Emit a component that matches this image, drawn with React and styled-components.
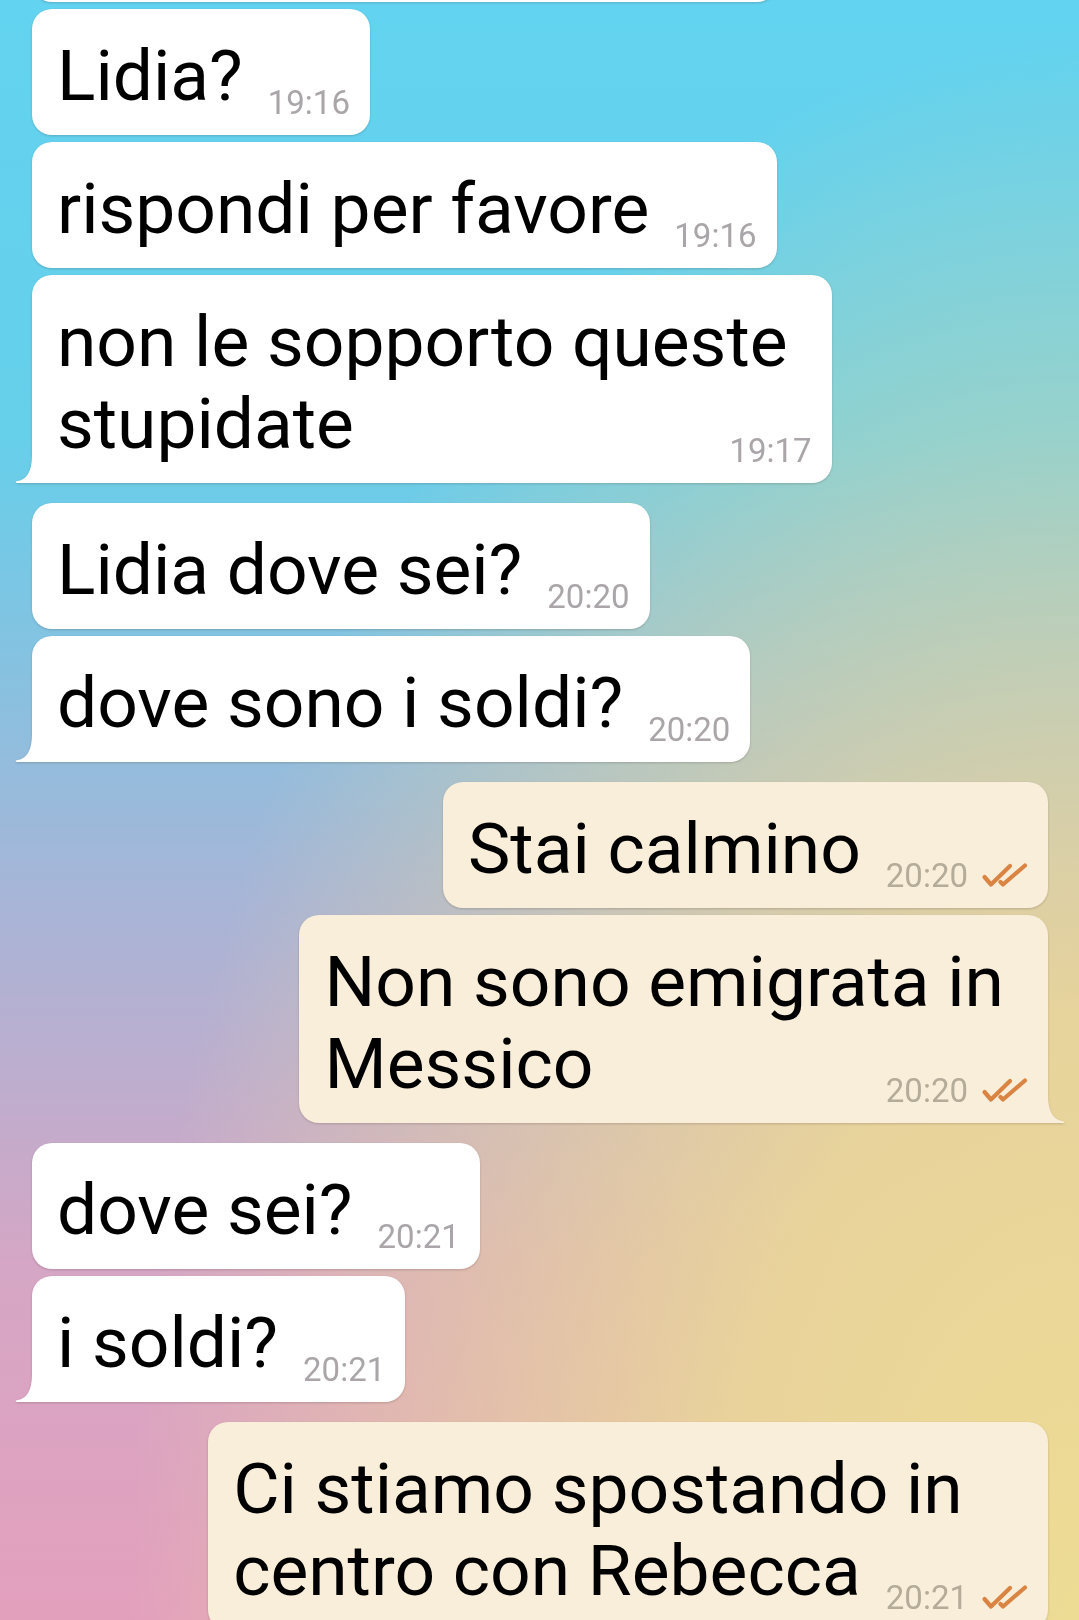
import React from "react";
import styled, { createGlobalStyle } from "styled-components";

const Global = createGlobalStyle`
  html, body {
    margin: 0;
    padding: 0;
  }
  body {
    font-family: Roboto, "Noto Sans", "Liberation Sans", sans-serif;
    -webkit-font-smoothing: antialiased;
  }
`;

const Screen = styled.div`
  width: 1079px;
  height: 1620px;
  overflow: hidden;
  background:
    radial-gradient(ellipse 88% 98% at 100% 100%, rgba(237, 220, 148, 1) 0%, rgba(234, 214, 152, 0.93) 38%, rgba(232, 210, 160, 0) 100%),
    linear-gradient(180deg, #62d3f0 0%, #66cfea 27%, #a6b5d7 55%, #d5a6c5 78%, #e3a0bd 100%);
`;

const List = styled.div`
  display: flex;
  flex-direction: column;
  padding: 0 31px 0 32px;
`;

const Bubble = styled.div`
  position: relative;
  display: flex;
  flex-direction: column;
  align-self: ${(p) => (p.$out ? "flex-end" : "flex-start")};
  margin-top: ${(p) => p.$gap}px;
  padding: 26px 20px 14px 25px;
  background: ${(p) => (p.$out ? "#f8eeda" : "#ffffff")};
  border-radius: 20px;
  ${(p) =>
    p.$tail
      ? p.$out
        ? "border-bottom-right-radius: 0;"
        : "border-bottom-left-radius: 0;"
      : ""}
  filter: drop-shadow(0 1.5px 0.8px rgba(60, 40, 40, 0.22));
  color: #000;
  font-size: 71.3px;
  line-height: 82px;
  white-space: nowrap;
`;

const Line = styled.div`
  margin-right: 24px;
`;

const LastRow = styled.div`
  display: flex;
  align-items: flex-end;
  justify-content: space-between;
  gap: 25px;
`;

const Text = styled.span`
  padding-bottom: 4px;
`;

const Meta = styled.span`
  display: inline-flex;
  align-items: center;
  gap: 13px;
  font-size: 33px;
  line-height: 37px;
  color: ${(p) => (p.$out ? "#b4ab99" : "#aaa5a8")};
`;

const TailSvg = styled.svg`
  position: absolute;
  bottom: 0;
  width: 20px;
  height: 28px;
  ${(p) => (p.$out ? "right: -17px; transform: scaleX(-1);" : "left: -17px;")}
`;

function Tail({ out }) {
  return (
    <TailSvg $out={out} viewBox="0 0 20 28" aria-hidden="true">
      <path
        d="M20 0 L17 0 Q17 24.5 1.6 26.2 Q0 26.5 0.8 27.4 Q1.3 28 3 28 L20 28 Z"
        fill={out ? "#f8eeda" : "#ffffff"}
      />
    </TailSvg>
  );
}

function Ticks() {
  return (
    <svg width="47" height="25" viewBox="0 0 47 25" aria-hidden="true">
      <g
        fill="none"
        stroke="#da8443"
        strokeWidth="4.2"
        strokeLinecap="round"
        strokeLinejoin="round"
      >
        <path d="M3.5 14 L10 21.5 L29 3" />
        <path d="M19.5 19 L22 21.5 L44 2.5" />
      </g>
    </svg>
  );
}

const messages = [
  { lines: ["rispondi per favore"], time: "19:15", gap: -124 },
  { lines: ["Lidia?"], time: "19:16", gap: 7 },
  { lines: ["rispondi per favore"], time: "19:16", gap: 7 },
  { lines: ["non le sopporto queste", "stupidate"], time: "19:17", gap: 7, tail: true },
  { lines: ["Lidia dove sei?"], time: "20:20", gap: 20 },
  { lines: ["dove sono i soldi?"], time: "20:20", gap: 7, tail: true },
  { out: true, lines: ["Stai calmino"], time: "20:20", gap: 20 },
  { out: true, lines: ["Non sono emigrata in", "Messico"], time: "20:20", gap: 7, tail: true },
  { lines: ["dove sei?"], time: "20:21", gap: 20 },
  { lines: ["i soldi?"], time: "20:21", gap: 7, tail: true },
  { out: true, lines: ["Ci stiamo spostando in", "centro con Rebecca"], time: "20:21", gap: 20 },
];

function Message({ m }) {
  const head = m.lines.slice(0, -1);
  const last = m.lines[m.lines.length - 1];
  return (
    <Bubble $out={m.out} $tail={m.tail} $gap={m.gap}>
      {head.map((l, i) => (
        <Line key={i}>{l}</Line>
      ))}
      <LastRow>
        <Text>{last}</Text>
        <Meta $out={m.out}>
          {m.time}
          {m.out && <Ticks />}
        </Meta>
      </LastRow>
      {m.tail && <Tail out={m.out} />}
    </Bubble>
  );
}

export default function App() {
  return (
    <>
      <Global />
      <Screen>
        <List>
          {messages.map((m, i) => (
            <Message key={i} m={m} />
          ))}
        </List>
      </Screen>
    </>
  );
}
